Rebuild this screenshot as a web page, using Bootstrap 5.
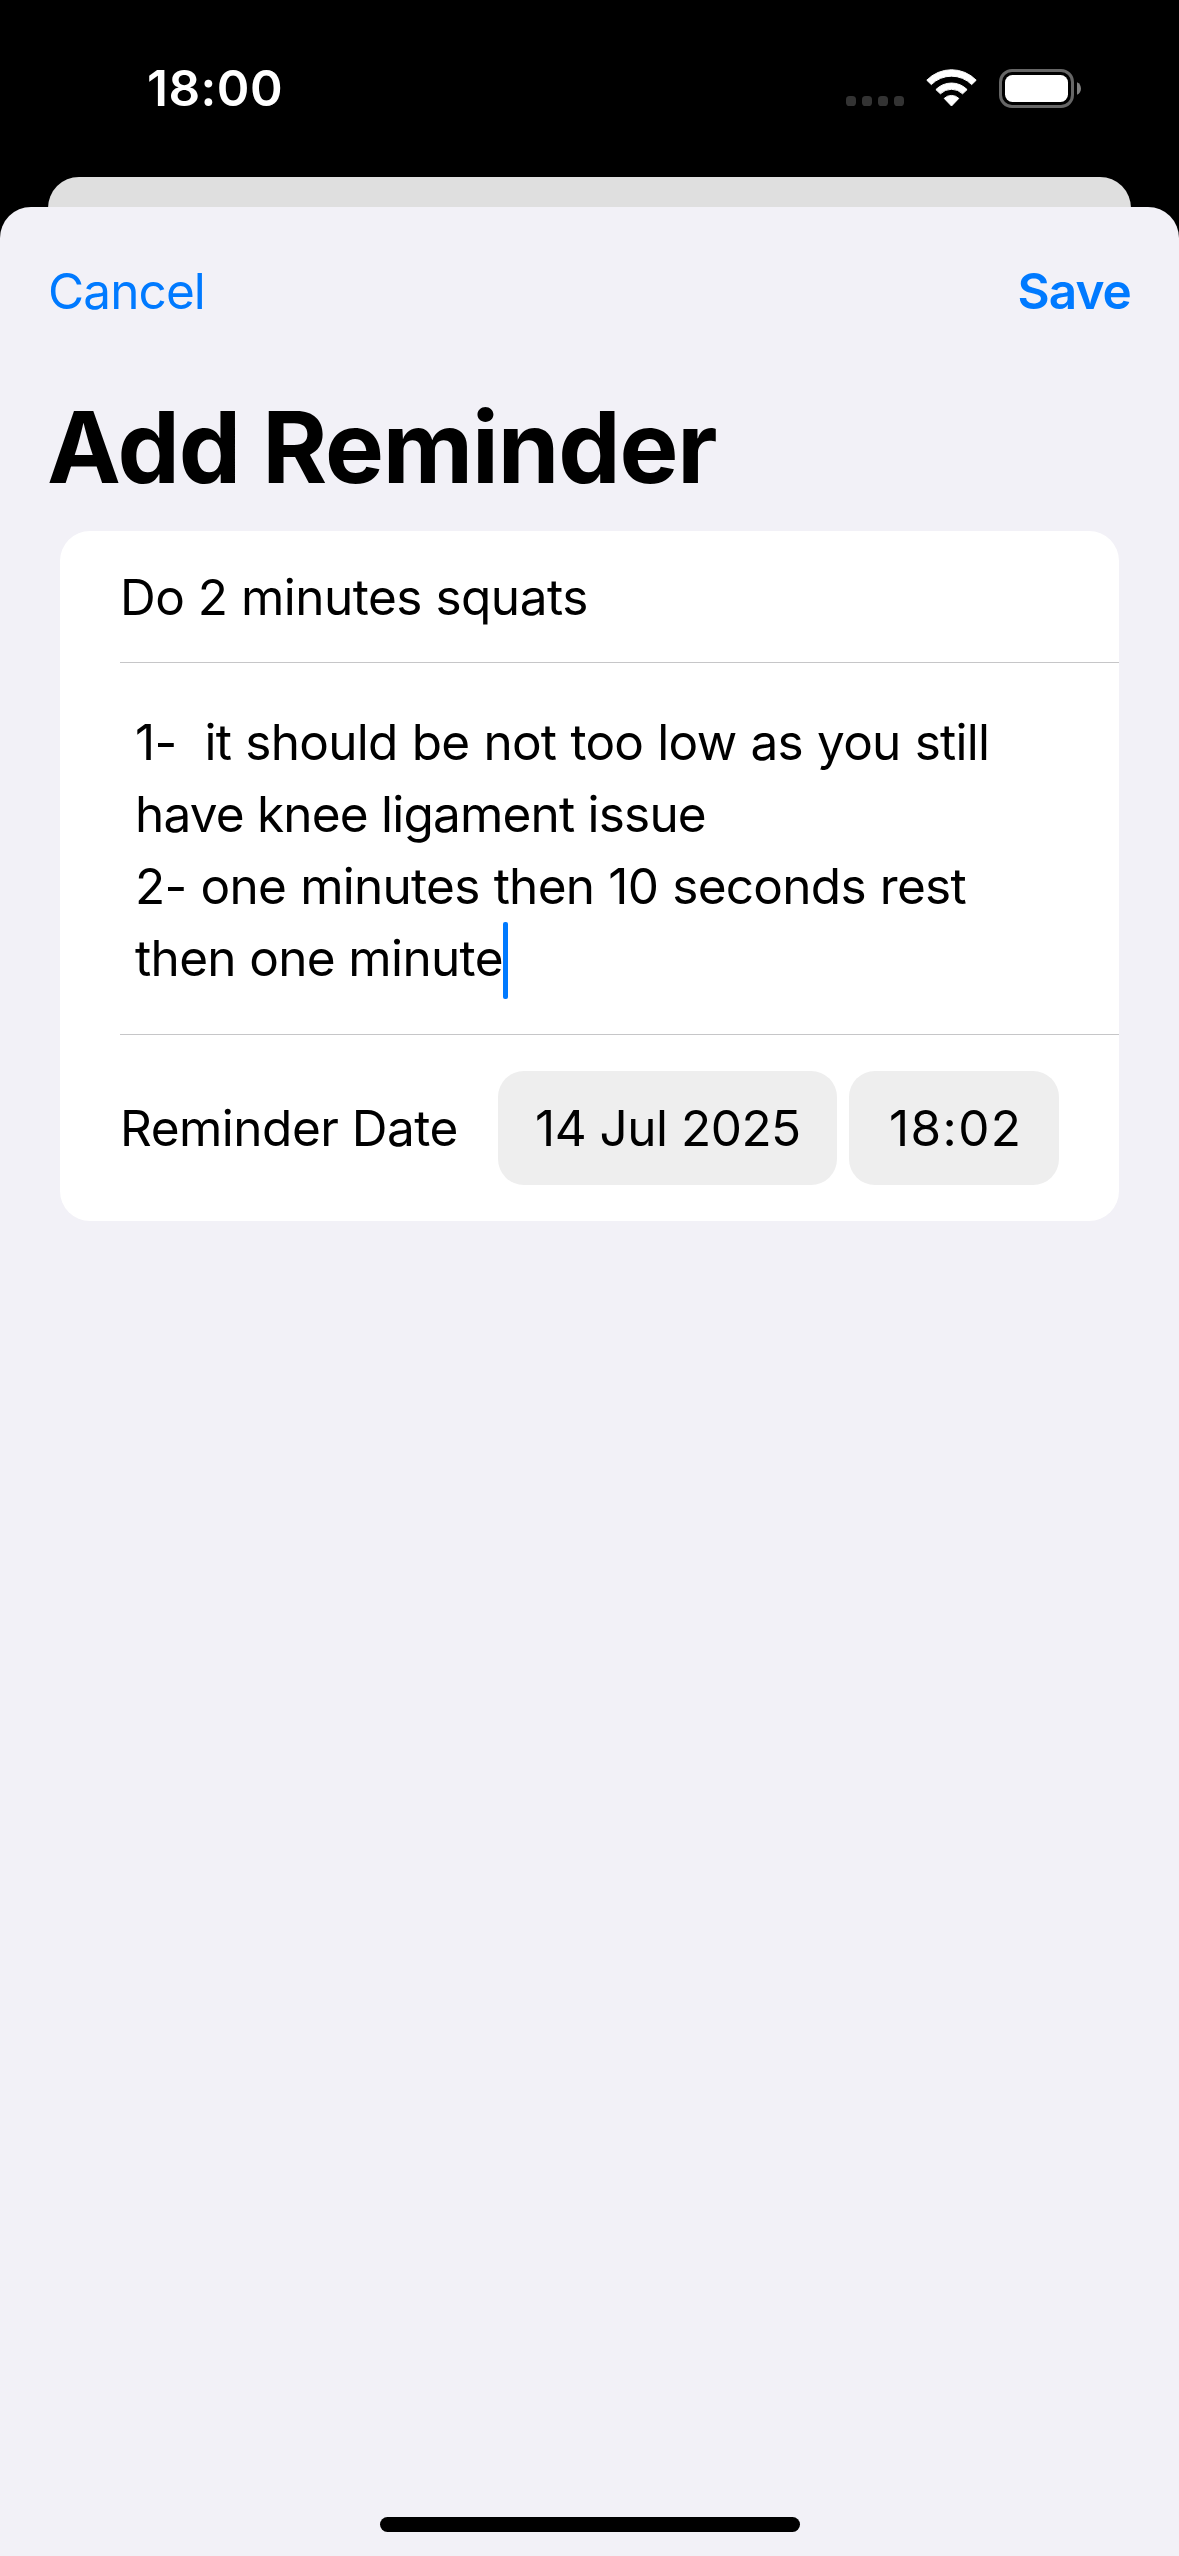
<!DOCTYPE html>
<html lang="en">
<head>
<meta charset="utf-8">
<meta name="viewport" content="width=device-width, initial-scale=1">
<title>Add Reminder</title>
<link href="https://cdn.jsdelivr.net/npm/bootstrap@5.3.0/dist/css/bootstrap.min.css" rel="stylesheet">
<style>
  body {
    background: #000;
    color: #000;
    font-family: Inter, "Liberation Sans", sans-serif;
    font-size: 49.5px;
    line-height: 72px;
    letter-spacing: -.5px;
  }
  .status-bar { height: 177px; padding: 52px 98px 0 147px; }
  .status-time { letter-spacing: .49px; }
  .status-icons { height: 72px; }
  .signal-dots { margin: 26px 22px 0 0; }
  .wifi { margin-right: 22px; }
  .sheet-behind { height: 60px; margin: 0 48px -30px; background: #dfdfdf; border-radius: 31px 31px 0 0; }
  .sheet { background: #f2f1f7; border-radius: 31px 31px 0 0; }
  .sheet-nav { padding: 48px 48px 0; }
  .nav-action { padding: 0; border: 0; font-size: inherit; line-height: inherit; color: #007aff; letter-spacing: -.9px; }
  .sheet-title { margin: 60px 47px 24px; font-size: 99px; line-height: 120px; letter-spacing: -1.15px; }
  .form-card { margin: 0 60px; border: 0; border-radius: 30px; color: #000; }
  .form-line { margin-left: 60px; border-bottom: 1px solid #c6c6c8; }
  .name-line { height: 132px; padding-top: 30px; }
  .notes-line { height: 372px; padding: 43px 0 0 15px; }
  .notes-line > div { white-space: pre; }
  .tight-a { letter-spacing: -.74px; word-spacing: .9px; }
  .tight-b { letter-spacing: -.8px; }
  .tight-c { letter-spacing: -.65px; }
  .caret { width: 5px; height: 77px; margin: 0 0 -6px; border-radius: 2px; background: #007aff; }
  .date-line { height: 186px; padding: 0 60px; }
  .pill-group { gap: 12px; }
  .pill { height: 114px; border-radius: 26px; background: #eee; line-height: 114px; }
  .pill-date { width: 339px; padding-left: 37px; letter-spacing: -.5px; }
  .pill-time { width: 210px; padding-left: 40px; letter-spacing: 1.4px; }
  .home-bar { width: 420px; height: 15px; margin-bottom: 24px; background: #000; }
</style>
</head>
<body>
<div class="d-flex flex-column vh-100 overflow-hidden">
  <header class="status-bar d-flex justify-content-between align-items-start flex-shrink-0 text-white">
    <span class="status-time fw-semibold">18:00</span>
    <div class="status-icons d-flex align-items-center">
      <svg class="signal-dots" width="58" height="10" viewBox="0 0 58 10" fill="#333">
        <rect width="10" height="10" rx="3.6"/><rect x="16" width="10" height="10" rx="3.6"/><rect x="32" width="10" height="10" rx="3.6"/><rect x="48" width="10" height="10" rx="3.6"/>
      </svg>
      <svg class="wifi" width="51" height="38" viewBox="0 0 51 38" fill="#fff" stroke="#fff" stroke-width="1" stroke-linejoin="round">
        <path d="M.8 11.2A34.4 34.4 0 0 1 50.2 11.2L45.7 15.6A28.4 28.4 0 0 0 5.3 15.6Z"/>
        <path d="M9.9 20.6A21.8 21.8 0 0 1 41.1 20.6L36.6 24.8A15.8 15.8 0 0 0 14.4 24.8Z"/>
        <path d="M18.2 29.4A10.5 10.5 0 0 1 32.8 29.4L25.5 37Z"/>
      </svg>
      <svg width="82" height="39" viewBox="0 0 82 39">
        <rect x="1.5" y="1.5" width="72" height="36" rx="11.5" fill="none" stroke="#666" stroke-width="3"/>
        <rect x="6" y="6" width="63" height="27" rx="7.5" fill="#fff"/>
        <path d="M78 13.2C83.300 15.500 83.300 23.500 78 25.800Z" fill="#808080"/>
      </svg>
    </div>
  </header>

  <div class="sheet-behind flex-shrink-0"></div>

  <main class="sheet d-flex flex-column flex-grow-1">
    <nav class="sheet-nav d-flex justify-content-between">
      <button type="button" class="btn nav-action">Cancel</button>
      <button type="button" class="btn nav-action fw-semibold">Save</button>
    </nav>
    <h1 class="sheet-title fw-bold">Add Reminder</h1>

    <section class="card form-card">
      <div class="form-line name-line">Do 2 minutes squats</div>
      <div class="form-line notes-line">
        <div class="tight-a">1-&nbsp; it should be not too low as you still</div>
        <div class="tight-b">have knee ligament issue</div>
        <div class="tight-a">2- one minutes then 10 seconds rest</div>
        <div class="tight-c d-flex">then one minute<span class="caret"></span></div>
      </div>
      <div class="date-line d-flex align-items-center">
        <span class="me-auto">Reminder Date</span>
        <div class="pill-group d-flex">
          <span class="pill pill-date">14 Jul 2025</span>
          <span class="pill pill-time">18:02</span>
        </div>
      </div>
    </section>

    <div class="home-bar rounded-pill mt-auto mx-auto"></div>
  </main>
</div>
<script src="https://cdn.jsdelivr.net/npm/bootstrap@5.3.0/dist/js/bootstrap.bundle.min.js"></script>
</body>
</html>
